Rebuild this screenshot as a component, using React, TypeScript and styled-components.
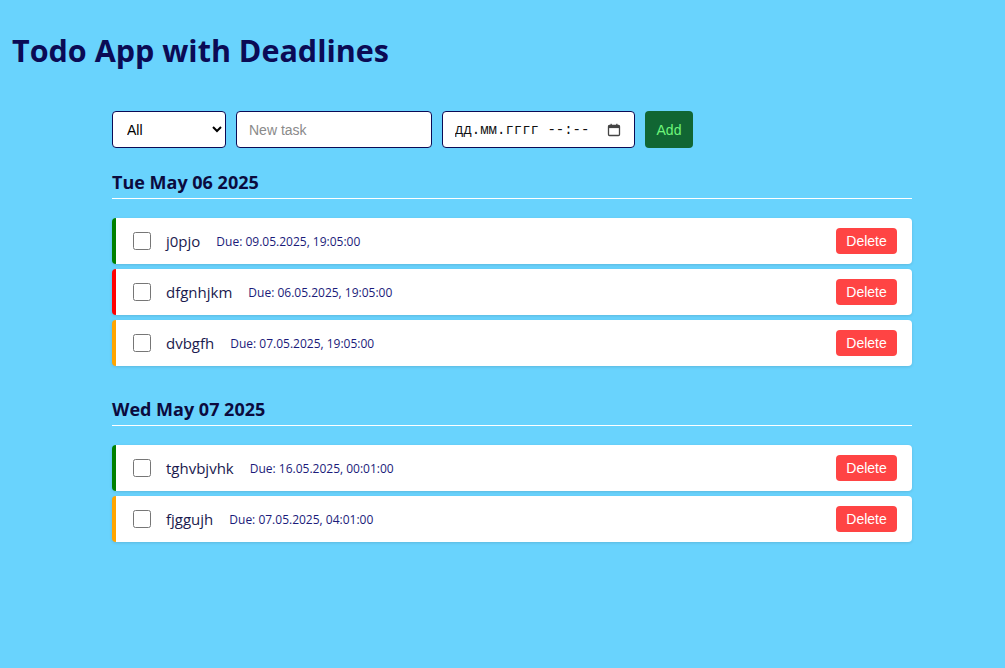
import React, { useState } from 'react'
import styled, { createGlobalStyle } from 'styled-components'

interface Task {
    id: number
    title: string
    due: string
    color: string
}

interface Group {
    date: string
    tasks: Task[]
}

const groups: Group[] = [
    {
        date: 'Tue May 06 2025',
        tasks: [
            { id: 1, title: 'j0pjo', due: '09.05.2025, 19:05:00', color: '#008000' },
            { id: 2, title: 'dfgnhjkm', due: '06.05.2025, 19:05:00', color: '#ff0000' },
            { id: 3, title: 'dvbgfh', due: '07.05.2025, 19:05:00', color: '#ffa500' }
        ]
    },
    {
        date: 'Wed May 07 2025',
        tasks: [
            { id: 4, title: 'tghvbjvhk', due: '16.05.2025, 00:01:00', color: '#008000' },
            { id: 5, title: 'fjggujh', due: '07.05.2025, 04:01:00', color: '#ffa500' }
        ]
    }
]

const GlobalStyle = createGlobalStyle`
    html, body {
        margin: 0;
        padding: 0;
        background: #69d3fd;
        min-height: 100%;
    }
    body {
        font-family: 'Segoe UI', 'Open Sans', sans-serif;
        color: #0b0b55;
    }
`

const Page = styled.div`
    padding: 12px 12px 40px 12px;
`

const Title = styled.h1`
    margin: 18px 0 41px 0;
    font-size: 30.5px;
    font-weight: 700;
    color: #0b0b55;
    line-height: 40px;
`

const Container = styled.div`
    width: 800px;
    margin-left: 100px;
`

const Controls = styled.div`
    display: flex;
    gap: 10px;
    margin-bottom: 22px;
`

const Field = styled.input`
    box-sizing: border-box;
    width: 196px;
    height: 37px;
    border: 1px solid #0b0b55;
    border-radius: 4px;
    padding: 0 12px;
    font-family: 'Liberation Sans', Arial, sans-serif;
    font-size: 14px;
    background: #fff;
    &::placeholder {
        color: #8a8a8a;
    }
`

const DateBox = styled.label`
    box-sizing: border-box;
    width: 193px;
    height: 37px;
    display: flex;
    align-items: center;
    border: 1px solid #0b0b55;
    border-radius: 4px;
    padding: 0 13px 0 12px;
    background: #fff;
    cursor: text;
`

const DateText = styled.input`
    flex: 1;
    min-width: 0;
    border: none;
    outline: none;
    padding: 0;
    font-family: 'Liberation Mono', 'DejaVu Sans Mono', monospace;
    font-size: 14px;
    color: #111;
    background: transparent;
    &::placeholder {
        color: #111;
    }
`

const Select = styled.select`
    box-sizing: border-box;
    width: 114px;
    height: 37px;
    border: 1px solid #0b0b55;
    border-radius: 4px;
    padding: 0 10px;
    font-family: 'Liberation Sans', Arial, sans-serif;
    font-size: 14px;
    background: #fff;
    color: #000;
`

const AddButton = styled.button`
    height: 37px;
    width: 48px;
    border: none;
    border-radius: 4px;
    background: #116633;
    color: #6ef57a;
    font-family: 'Liberation Sans', Arial, sans-serif;
    font-size: 14px;
    cursor: pointer;
`

const Section = styled.section`
    margin-bottom: 31px;
`

const DateHeading = styled.h3`
    margin: 0 0 19px 0;
    padding-bottom: 4px;
    font-size: 18px;
    font-weight: 700;
    line-height: 24px;
    color: #0b0b3e;
    border-bottom: 1px solid #ffffff;
`

const List = styled.ul`
    list-style: none;
    margin: 0;
    padding: 0;
    display: flex;
    flex-direction: column;
    gap: 5px;
`

const Item = styled.li<{ $color: string }>`
    box-sizing: border-box;
    height: 46px;
    display: flex;
    align-items: center;
    background: #fff;
    border-left: 4px solid ${p => p.$color};
    border-radius: 4px;
    padding: 0 15px 0 17px;
    box-shadow: 0 1px 3px rgba(0, 0, 0, 0.12);
`

const Check = styled.input`
    width: 18px;
    height: 18px;
    margin: 0 15px 0 0;
    cursor: pointer;
`

const TaskTitle = styled.span`
    font-size: 15px;
    color: #1a1a4e;
    margin-right: 16px;
`

const Due = styled.span`
    font-size: 12px;
    color: #1b1b7a;
`

const DeleteButton = styled.button`
    margin-left: auto;
    height: 26px;
    width: 61px;
    border: none;
    border-radius: 4px;
    background: #ff4444;
    color: #fff;
    font-family: 'Liberation Sans', Arial, sans-serif;
    font-size: 14px;
    cursor: pointer;
`

const CalendarIcon = () => (
    <svg width="14" height="14" viewBox="0 0 14 14">
        <rect x="1.5" y="2.5" width="11" height="10" rx="1" fill="none" stroke="#444" strokeWidth="1.3" />
        <rect x="1.5" y="2.5" width="11" height="2.6" fill="#444" />
        <rect x="3.5" y="0.8" width="1.3" height="2.4" fill="#444" />
        <rect x="9.2" y="0.8" width="1.3" height="2.4" fill="#444" />
    </svg>
)

function App(): JSX.Element {
    const [filter, setFilter] = useState('all')
    const [done, setDone] = useState<number[]>([])

    const toggle = (id: number) => {
        setDone(done.includes(id) ? done.filter(d => d !== id) : [...done, id])
    }

    return (
        <>
            <GlobalStyle />
            <Page>
                <Title>Todo App with Deadlines</Title>
                <Container>
                    <Controls>
                        <Select value={filter} onChange={e => setFilter(e.target.value)}>
                            <option value="all">All</option>
                            <option value="active">Active</option>
                            <option value="done">Completed</option>
                        </Select>
                        <Field type="text" placeholder="New task" />
                        <DateBox>
                            <DateText type="text" placeholder="дд.мм.гггг --:--" />
                            <CalendarIcon />
                        </DateBox>
                        <AddButton>Add</AddButton>
                    </Controls>
                    {groups.map(group => (
                        <Section key={group.date}>
                            <DateHeading>{group.date}</DateHeading>
                            <List>
                                {group.tasks.map(task => (
                                    <Item key={task.id} $color={task.color}>
                                        <Check
                                            type="checkbox"
                                            checked={done.includes(task.id)}
                                            onChange={() => toggle(task.id)}
                                        />
                                        <TaskTitle>{task.title}</TaskTitle>
                                        <Due>Due: {task.due}</Due>
                                        <DeleteButton>Delete</DeleteButton>
                                    </Item>
                                ))}
                            </List>
                        </Section>
                    ))}
                </Container>
            </Page>
        </>
    )
}

export default App
